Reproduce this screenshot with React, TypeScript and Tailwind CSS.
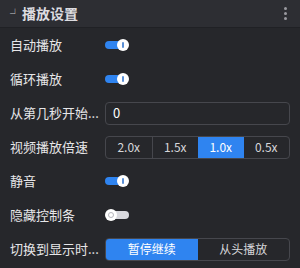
const font = { fontFamily: '"Noto Sans CJK SC", "Liberation Sans", sans-serif' };

function Toggle({ on }: { on: boolean }) {
  return on ? (
    <div className="relative w-[24px] h-[12px] flex items-center">
      <div className="h-[8px] w-[18px] rounded-full bg-[#2f84f0]" />
      <div className="absolute right-0 top-0 w-[12px] h-[12px] rounded-full bg-white flex items-center justify-center">
        <div className="w-[2px] h-[6px] rounded-sm bg-[#5a8fd6]" />
      </div>
    </div>
  ) : (
    <div className="relative w-[24px] h-[12px] flex items-center">
      <div className="ml-[4px] h-[8px] w-[20px] rounded-full bg-[#d9d9de]" />
      <div className="absolute left-0 top-0 w-[12px] h-[12px] rounded-full bg-white flex items-center justify-center">
        <div className="w-[6px] h-[6px] rounded-full border border-[#b5b5bb]" />
      </div>
    </div>
  );
}

function Row({ label, children }: { label: string; children: React.ReactNode }) {
  return (
    <div className="flex items-center h-[34px] px-[10px]">
      <div className="w-[95px] shrink-0 text-[13px] text-[#e6e6e8] whitespace-nowrap">{label}</div>
      <div className="flex-1 flex items-center">{children}</div>
    </div>
  );
}

function Segmented({ options, active }: { options: string[]; active: number }) {
  return (
    <div className="flex w-full h-[23px] rounded-[4px] border border-[#46474d] overflow-hidden">
      {options.map((o, i) => (
        <div
          key={o}
          className={
            "flex-1 flex items-center justify-center text-[12px] " +
            (i > 0 && i !== active && i - 1 !== active ? "border-l border-[#46474d] " : "") +
            (i === active ? "bg-[#2f84f0] text-white" : "text-[#d6d6da]")
          }
        >
          {o}
        </div>
      ))}
    </div>
  );
}

export default function App() {
  return (
    <div className="w-[300px] h-[268px] bg-[#26272b] overflow-hidden" style={font}>
      <div className="h-[28px] bg-[#2d2e33] border-b border-[#202125] flex items-center pl-[10px] pr-[10px]">
        <span className="text-[10px] text-[#c8c8cc] mr-[2px] leading-none">┘</span>
        <span className="text-[14px] font-bold text-[#dcdce0]">播放设置</span>
        <div className="ml-auto flex flex-col gap-[2px] items-center mr-[3px]">
          <div className="w-[3px] h-[3px] rounded-full bg-[#9a9aa0]" />
          <div className="w-[3px] h-[3px] rounded-full bg-[#9a9aa0]" />
          <div className="w-[3px] h-[3px] rounded-full bg-[#9a9aa0]" />
        </div>
      </div>
      <div>
        <Row label="自动播放"><Toggle on /></Row>
        <Row label="循环播放"><Toggle on /></Row>
        <Row label="从第几秒开始...">
          <div className="w-full h-[23px] rounded-[4px] border border-[#46474d] flex items-center px-[7px] text-[13px] text-white">0</div>
        </Row>
        <Row label="视频播放倍速">
          <Segmented options={["2.0x", "1.5x", "1.0x", "0.5x"]} active={2} />
        </Row>
        <Row label="静音"><Toggle on /></Row>
        <Row label="隐藏控制条"><Toggle on={false} /></Row>
        <Row label="切换到显示时...">
          <Segmented options={["暂停继续", "从头播放"]} active={0} />
        </Row>
      </div>
    </div>
  );
}
